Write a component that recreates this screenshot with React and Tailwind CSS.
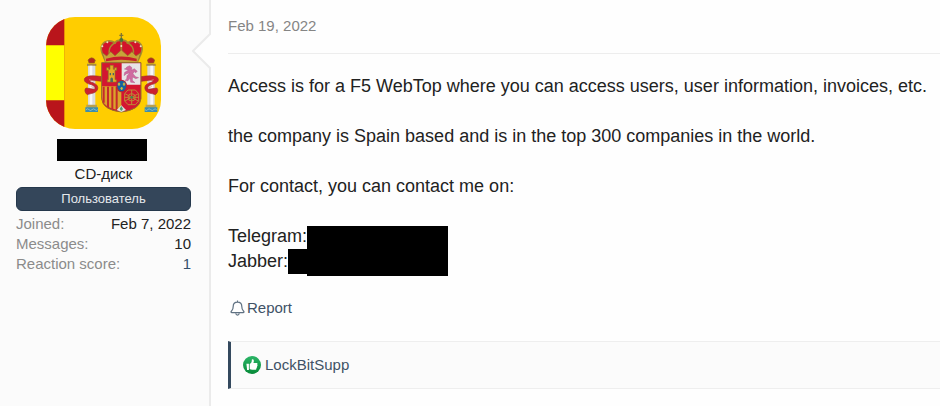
import React from 'react';

const stats = [
  { label: 'Joined:', value: 'Feb 7, 2022' },
  { label: 'Messages:', value: '10' },
  { label: 'Reaction score:', value: '1', href: '#reactions' },
];

function Pillar() {
  return (
    <g>
      <path d="M176 179q11-13 22 0l-3 9h-16z" fill="#b5271e" stroke="#93651e" strokeWidth="2" />
      <path d="M173 190h28v7h-28z" fill="#a9893c" />
      <path d="M176 196h22v122h-22z" fill="#d9dce0" />
      <path d="M181 196h8v122h-8z" fill="#f7f7f7" />
      <path d="M171 313h32v9h-32z" fill="#b9a050" />
      <path d="M168 321h38v14h-38z" fill="#3d8eae" />
      <path d="M170 328q5-5 9 0t9 0 9 0 8 0" fill="none" stroke="#a9cfd6" strokeWidth="2" />
      <path d="M217 229c-20-3-43-5-51 5-4 9 5 15 16 18 13 4 18 9 13 15l-25-4c-6 5-3 15 4 20 9-4 27-3 31-17 3-14-12-18-22-22-6-4 7-5 34-1z" fill="#cc2130" stroke="#9c3029" strokeWidth="2" />
      <path d="M179 238l17 5M184 258l12 6" stroke="#e7a08b" strokeWidth="2" />
    </g>
  );
}

function SpainAvatar() {
  return (
    <svg className="h-28 w-[115px] rounded-[29px]" viewBox="50 50 345 336" preserveAspectRatio="none" role="img" aria-label="Flag of Spain">
      <path d="M50 50h345v336H50z" fill="#ffcd00" />
      <path d="M50 50h55v336H50z" fill="#b9151b" />
      <path d="M50 135h55v165H50z" fill="#ffff00" />

      <Pillar />
      <g transform="translate(552 0) scale(-1 1)">
        <Pillar />
      </g>

      {/* crown */}
      <path d="M227 180c-5-16-14-27-11-40 5-20 25-22 42-13 3-10 33-10 36 0 17-9 39-7 44 13 3 13-7 24-11 40z" fill="#d2142b" />
      <g fill="none" stroke="#a88b30" strokeWidth="5">
        <path d="M227 178c-7-14-14-26-11-38 5-20 25-22 42-13 3-10 33-10 36 0 17-9 39-7 44 13 3 12-4 24-11 38" />
        <path d="M244 172c-9-20-3-37 14-45M308 172c9-20 3-37-14-45M276 120v50" />
      </g>
      <path d="M219 157l13 10 12-13 13 12 19-17 19 17 13-12 12 13 14-10-9 30H228z" fill="#c8a339" stroke="#8c7329" strokeWidth="2" />
      <path d="M230 175q46-13 92 0v8q-46-9-92 0z" fill="#c61f2c" />
      <path d="M276 98v18M270 105h12" stroke="#84772f" strokeWidth="4" />
      <circle cx="276" cy="119" r="6" fill="#48763c" />
      <g fill="#eee4c0">
        <circle cx="219" cy="138" r="3" />
        <circle cx="234" cy="126" r="3" />
        <circle cx="318" cy="126" r="3" />
        <circle cx="334" cy="138" r="3" />
        <circle cx="276" cy="137" r="3" />
      </g>

      {/* quartered shield */}
      <path d="M217 187h118v108q-3 34-59 40-56-6-59-40z" fill="#d31631" stroke="#91702d" strokeWidth="3" />
      <path d="M277 189h56v64h-56z" fill="#e7e5e6" />
      <path d="M218 258h58v72q-58-6-58-41z" fill="#dba32b" />
      <path d="M223 259v48M236 259v61M249 259v68M262 259v70" stroke="#c52a2b" strokeWidth="6" />
      <path d="M234 245v-7h3v-28h-5v-8h6v5h4v-12h10v12h4v-5h6v8h-5v28h4v7z" fill="#e4ae27" stroke="#8e7a29" strokeWidth="2" />
      <path d="M243 245v-10q4-7 8 0v10zM241 218h4v7h-4zM250 218h4v7h-4z" fill="#4b6b63" />
      <path d="M292 200l9-4 7 6-2 8 9-5 9 8-6 5-2-6-5 8 8 9 9 3-9 3-9-5-1 10 8 7-13-1-2-12-7 8-8-2 5-4 1-10 8-8-9 2-8 6 2-10 11-6-12-4 6-3z" fill="#cf6aa0" stroke="#a54a7d" strokeWidth="1" />
      <g fill="none" stroke="#bd8a35" strokeWidth="3">
        <path d="M296 269h22l10 11v22l-10 11h-22l-10-11v-22z" />
        <path d="M287 280l40 22M287 302l40-22M307 269v44M285 291h44" />
        <circle cx="307" cy="291" r="11" />
      </g>
      <circle cx="307" cy="291" r="4" fill="#478249" />
      <path d="M262 329l14-14 14 14-14 6z" fill="#dfe3dd" />
      <path d="M271 326l5-9 5 9-5 6z" fill="#4e9b73" />
      <ellipse cx="277" cy="257" rx="16" ry="19" fill="#b62333" />
      <ellipse cx="277" cy="257" rx="13" ry="16" fill="#1463a0" />
      <path d="M269 247l3 4-3 5-3-5zM284 247l3 4-3 5-3-5zM277 260l3 4-3 5-3-5z" fill="#d7bd3d" stroke="#d7bd3d" strokeWidth="2" />
    </svg>
  );
}

function BellIcon() {
  return (
    <svg className="h-4 w-[15px]" viewBox="0 0 15 16" fill="none" stroke="#5f7182" strokeWidth="1.2" strokeLinejoin="round" aria-hidden="true">
      <path d="M7.5.5v1.6M7.5 2.1C4.8 2.1 3.2 4 3.2 6.4c0 3.5-1.2 4.1-2 5-.5.6-.1 1.3.6 1.3h11.4c.7 0 1.1-.7.6-1.3-.8-.9-2-1.5-2-5 0-2.4-1.6-4.3-4.3-4.3z" />
      <path d="M5.8 13.2c.2 2.5 3.2 2.5 3.4 0" />
    </svg>
  );
}

function LikeIcon() {
  return (
    <svg className="h-[18px] w-[18px]" viewBox="0 0 18 18" aria-hidden="true">
      <defs>
        <linearGradient id="like" x1="0" y1="0" x2="0" y2="1">
          <stop offset="0" stopColor="#2bb567" />
          <stop offset="1" stopColor="#078a38" />
        </linearGradient>
      </defs>
      <circle cx="9" cy="9" r="9" fill="url(#like)" />
      <path d="M3.4 7.8h2.5v6.1H4.1zM6.7 8c1.7-.9 2.2-2.4 2.1-4.2 0-.8 1.8-.7 2 .6.2 1.1-.2 2-.5 2.7h3.2c1 0 1.3 1.1.7 1.6.6.6.4 1.4-.2 1.7.3.7.1 1.3-.6 1.6.2.9-.2 1.7-1.2 1.7H9.3c-1 0-1.8-.3-2.6-.6z" fill="#fff" />
    </svg>
  );
}

export default function App() {
  return (
    <article className="flex min-h-screen bg-[#fefefe] font-['Liberation_Sans',Arial,sans-serif] text-[#222]">
      <aside className="relative w-[211px] shrink-0 border-r-2 border-[#ebebeb] bg-[#fbfbfb] pt-[17px] pr-[18px] pl-4 text-[15px]">
        <div className="flex flex-col items-center">
          <SpainAvatar />
          <div className="mt-[10px] mr-1 h-[22px] w-[90px] bg-black" />
          <h5 className="mt-[3px] leading-5">CD-диск</h5>
          <div className="mt-[3px] h-6 w-full rounded-md border border-[#25384c] bg-[#34465a] text-center text-[13px] leading-[22px] text-[#e4e8ec]">
            Пользователь
          </div>
        </div>
        <dl className="mt-[3px]">
          {stats.map(({ label, value, href }) => (
            <div key={label} className="flex justify-between leading-5">
              <dt className="text-[#8b8b8b]">{label}</dt>
              <dd>{href ? <a href={href} className="text-[#34506b]">{value}</a> : value}</dd>
            </div>
          ))}
        </dl>
        <svg className="absolute top-[33px] -right-[2px] h-9 w-[19px]" viewBox="0 0 19 36" aria-hidden="true">
          <path d="M19 1h-1L1 18l17 17h1z" fill="#fefefe" />
          <path d="M18 0v1L1 18l17 17v1" fill="none" stroke="#ebebeb" strokeWidth="2" />
        </svg>
      </aside>

      <div className="min-w-0 flex-1 pl-[17px]">
        <header className="border-b border-[#ededed] pt-4 pb-[17px] text-[15px] leading-5 text-[#858585]">
          <time dateTime="2022-02-19">Feb 19, 2022</time>
        </header>

        <div className="mt-5 text-lg leading-[25px]">
          <p>Access is for a F5 WebTop where you can access users, user information, invoices, etc.</p>
          <p className="mt-[25px]">the company is Spain based and is in the top 300 companies in the world.</p>
          <p className="mt-[25px]">For contact, you can contact me on:</p>
          <div className="mt-[25px] w-[220px]">
            <div className="flex h-[25px] justify-between">
              Telegram:
              <span className="mt-0.5 h-[50px] w-[142px] bg-black" />
            </div>
            <div className="flex h-[25px] justify-between">
              Jabber:
              <span className="h-[25px] w-[161px] bg-black" />
            </div>
          </div>
        </div>

        <a href="#report" className="mt-6 ml-0.5 flex w-fit items-center gap-0.5 text-[15px] leading-5 text-[#405266]">
          <BellIcon />
          Report
        </a>

        <footer className="mt-[23px] flex h-12 items-center gap-1 border-y border-l-[3px] border-y-[#eeeeee] border-l-[#34495e] bg-[#fbfbfb] pl-3 text-[15px]">
          <LikeIcon />
          <a href="#lockbitsupp" className="text-[#405266]">LockBitSupp</a>
        </footer>
      </div>
    </article>
  );
}
